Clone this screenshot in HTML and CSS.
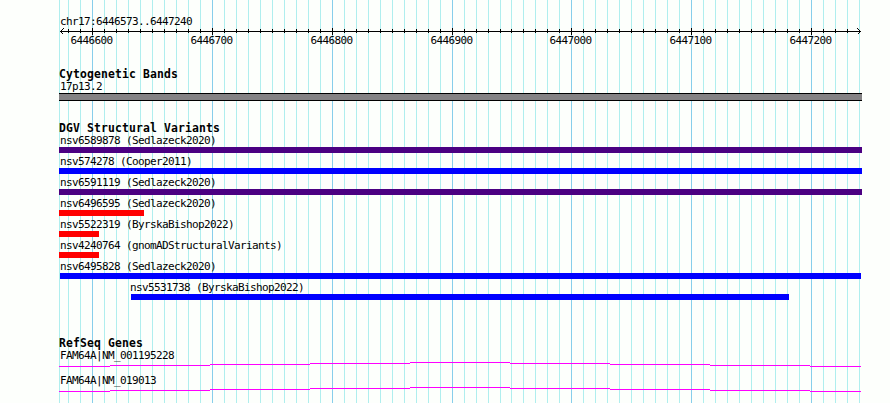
FILE: index.html
```
<!DOCTYPE html>
<html lang="en">

<head>
    <meta charset="UTF-8">
    <title>chr17:6446573..6447240</title>
    <link rel="stylesheet" href="styles.css">
</head>

<body>
    <div class="browser">
        <svg class="grid" id="grid" width="890" height="403"></svg>

        <div class="ruler">
            <div class="label">chr17:6446573..6447240</div>
            <svg class="axis" id="axis" width="890" height="22">
                <path d="M60 4.5H861M63.5 1.5l-3 3l3 3M857.5 1.5l3 3l-3 3" />
            </svg>
        </div>

        <div class="track cyto">
            <h2>Cytogenetic Bands</h2>
            <div class="label">17p13.2</div>
            <div class="band"></div>
        </div>

        <div class="track variants">
            <h2>DGV Structural Variants</h2>
            <div class="feature"><div class="label">nsv6589878 (Sedlazeck2020)</div><div class="bar indigo"></div></div>
            <div class="feature"><div class="label">nsv574278 (Cooper2011)</div><div class="bar blue"></div></div>
            <div class="feature"><div class="label">nsv6591119 (Sedlazeck2020)</div><div class="bar indigo"></div></div>
            <div class="feature"><div class="label">nsv6496595 (Sedlazeck2020)</div><div class="bar red" style="width: 85px"></div></div>
            <div class="feature"><div class="label">nsv5522319 (ByrskaBishop2022)</div><div class="bar red" style="width: 40px"></div></div>
            <div class="feature"><div class="label">nsv4240764 (gnomADStructuralVariants)</div><div class="bar red" style="width: 40px"></div></div>
            <div class="feature"><div class="label">nsv6495828 (Sedlazeck2020)</div><div class="bar blue" style="width: 801px; margin-left: 1px"></div></div>
            <div class="feature inner"><div class="label">nsv5531738 (ByrskaBishop2022)</div><div class="bar blue" style="width: 658px; margin-left: 2px"></div></div>
        </div>

        <div class="track genes">
            <h2>RefSeq Genes</h2>
            <div class="gene">
                <div class="label">FAM64A|NM_001195228</div>
                <svg class="intron" width="803" height="7">
                    <path d="M0 5.5H51M51 4.5H151M151 3.5H251M251 2.5H351M351 1.5H451M451 2.5H551M551 3.5H651M651 4.5H751M751 5.5H802" />
                </svg>
            </div>
            <div class="gene">
                <div class="label">FAM64A|NM_019013</div>
                <svg class="intron" width="803" height="7">
                    <path d="M0 5.5H51M51 4.5H151M151 3.5H251M251 2.5H351M351 1.5H451M451 2.5H551M551 3.5H651M651 4.5H751M751 5.5H802" />
                </svg>
            </div>
        </div>
    </div>
    <script src="script.js"></script>
</body>
</html>
```

FILE: styles.css
```
* {
    padding: 0;
    margin: 0;
    box-sizing: border-box;
}

body {
    background: #fdfffc;
}

.browser {
    width: 890px;
    height: 403px;
    position: relative;
    overflow: hidden;
    padding-top: 14px;
    color: #000;
    font-family: "DejaVu Sans Mono", "Liberation Mono", monospace;
    font-size: 11px;
    letter-spacing: -0.62px;
}

svg {
    display: block;
    shape-rendering: crispEdges;
}

/* guide lines behind all tracks */
.grid {
    position: absolute;
    left: 0;
    top: 0;
    z-index: -1;
}

.grid .minor {
    stroke: #afeeee;
}

.grid .major {
    stroke: #87ceeb;
}

.label {
    height: 13px;
    line-height: 13px;
    padding-left: 1px;
    white-space: pre;
}

.ruler {
    height: 54px;
}

.ruler .label {
    margin-left: 59px;
    line-height: 15px;
}

.axis {
    overflow: visible;
}

.axis path {
    fill: none;
    stroke: #000;
}

.axis text {
    text-anchor: middle;
}

.track {
    width: 803px;
    margin-left: 59px;
}

.track h2 {
    height: 12px;
    line-height: 12px;
    font-size: 11.4px;
    font-weight: bold;
    letter-spacing: 0.14px;
    white-space: pre;
}

.cyto {
    height: 54px;
}

.band {
    height: 8px;
    background: #848284;
    border-top: 1px solid #000;
    border-bottom: 1px solid #000;
}

.variants {
    height: 215px;
}

.feature {
    height: 21px;
}

.inner {
    margin-left: 70px;
}

.bar {
    height: 6px;
}

.indigo {
    background: #4b0082;
}

.blue {
    background: #0000ff;
}

.red {
    background: #ff0000;
}

.gene {
    height: 25px;
}

.intron {
    margin-top: -1px;
}

.intron path {
    fill: none;
    stroke: #ff00ff;
}
```

FILE: script.js
```
var grid = document.getElementById("grid");
var axis = document.getElementById("axis");
var majors = [92, 212, 332, 452, 571, 691, 811];
var lines = [];

for (var x = 68; x <= 500; x += 12) {
    lines.push(x);
}
for (var x = 511; x <= 859; x += 12) {
    lines.push(x);
}

function add(parent, tag, attrs, text) {
    var el = document.createElementNS("http://www.w3.org/2000/svg", tag);
    for (var key in attrs) {
        el.setAttribute(key, attrs[key]);
    }
    if (text) {
        el.textContent = text;
    }
    parent.appendChild(el);
}

add(grid, "path", { "class": "minor", d: "M59.5 0V403" });

for (var i = 0; i < lines.length; i++) {
    var pos = lines[i] + 0.5;
    var index = majors.indexOf(lines[i]);
    add(grid, "path", { "class": index < 0 ? "minor" : "major", d: "M" + pos + " 0V403" });

    if (index >= 0) {
        add(axis, "path", { d: "M" + pos + " 1V8" });
        add(axis, "text", { x: lines[i] - 0.5, y: 17 }, String(6446600 + index * 100));
    } else if (lines[i] < 859) {
        add(axis, "path", { d: "M" + pos + " 2V6" });
    }
}
```
